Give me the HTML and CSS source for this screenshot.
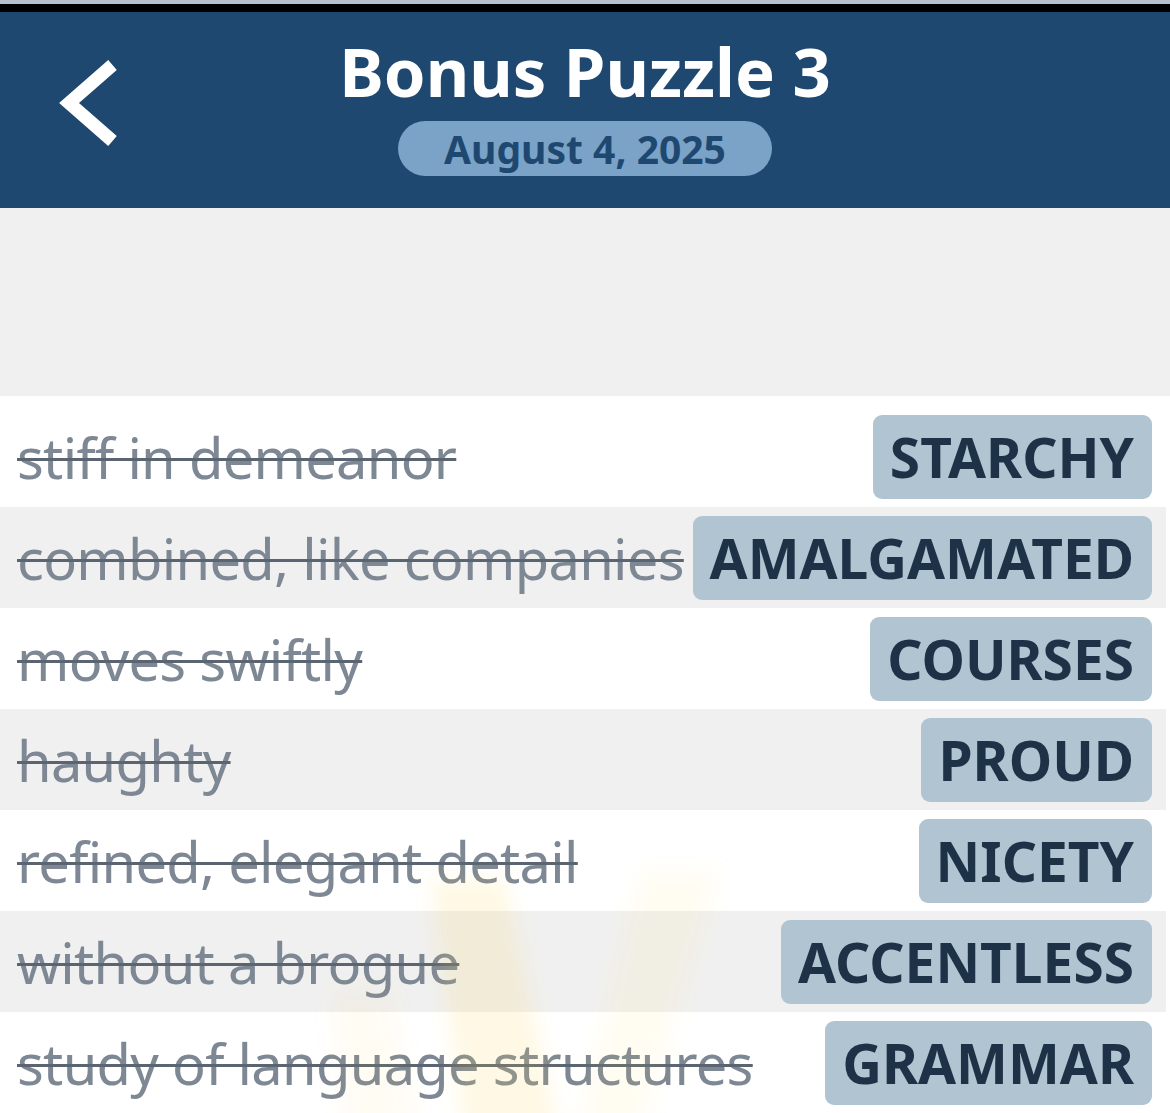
FILE: index.html
```html
<!DOCTYPE html>
<html lang="en">
<head>
<meta charset="utf-8">
<title>Bonus Puzzle 3</title>
<link rel="stylesheet" href="styles.css">
</head>
<body>
<div class="statusbar"></div>
<header class="header">
  <div class="back">
    <svg class="back-icon" width="64" height="95" viewBox="0 0 64 95" aria-hidden="true">
      <polyline points="56.5,9 13,47 56.5,85" fill="none" stroke="#ffffff" stroke-width="13" stroke-linejoin="miter" stroke-linecap="butt"/>
    </svg>
  </div>
  <div class="titles">
    <h1 class="title">Bonus Puzzle 3</h1>
    <div class="date">August 4, 2025</div>
  </div>
  <div class="spacer-col"></div>
</header>
<div class="gap"></div>
<main class="list">
  <svg class="watermark" width="1170" height="717" viewBox="0 0 1170 717" aria-hidden="true">
    <defs>
      <filter id="soft" x="-20%" y="-20%" width="140%" height="140%">
        <feGaussianBlur stdDeviation="10"/>
      </filter>
    </defs>
    <g filter="url(#soft)">
      <polygon points="430,484 505,484 560,740 465,740" fill="#fbd35a" opacity="0.16"/>
      <polygon points="640,474 720,474 640,740 575,740" fill="#fbd35a" opacity="0.08"/>
      <polygon points="330,594 390,594 420,740 345,740" fill="#fbd35a" opacity="0.06"/>
    </g>
  </svg>
  <div class="row"><span class="clue">stiff in demeanor</span><span class="answer">STARCHY</span></div>
  <div class="row alt"><span class="clue">combined, like companies</span><span class="answer">AMALGAMATED</span></div>
  <div class="row"><span class="clue">moves swiftly</span><span class="answer">COURSES</span></div>
  <div class="row alt"><span class="clue">haughty</span><span class="answer">PROUD</span></div>
  <div class="row"><span class="clue">refined, elegant detail</span><span class="answer">NICETY</span></div>
  <div class="row alt"><span class="clue">without a brogue</span><span class="answer">ACCENTLESS</span></div>
  <div class="row"><span class="clue">study of language structures</span><span class="answer">GRAMMAR</span></div>
</main>
</body>
</html>
```

FILE: styles.css
```css
* { box-sizing: border-box; }
html, body {
  margin: 0;
  padding: 0;
  background: #ffffff;
  font-family: "Noto Sans", "Open Sans", sans-serif;
}
body {
  width: 1170px;
  height: 1113px;
  overflow: hidden;
}
.statusbar {
  height: 12px;
  background: #000000;
  border-top: 4px solid #b7c1cd;
}
.header {
  height: 196px;
  background: #1f4870;
  display: grid;
  grid-template-columns: 1fr auto 1fr;
  padding-top: 26px;
}
.back {
  padding-left: 56px;
  padding-top: 18px;
}
.back-icon { display: block; }
.titles {
  display: flex;
  flex-direction: column;
  align-items: center;
}
.title {
  margin: 0;
  font-size: 67px;
  line-height: 66px;
  font-weight: 700;
  color: #ffffff;
}
.date {
  margin-top: 17px;
  height: 55px;
  line-height: 55px;
  padding: 0 46px;
  border-radius: 28px;
  background: #7aa3c7;
  color: #1f4870;
  font-size: 39px;
  font-weight: 700;
}
.gap {
  height: 188px;
  background: #f0f0f0;
}
.list {
  position: relative;
  padding-top: 10px;
  padding-right: 4px;
  background: #ffffff;
}
.watermark {
  position: absolute;
  left: 0;
  top: 0;
  pointer-events: none;
  z-index: 1;
}
.row {
  height: 101px;
  display: flex;
  align-items: center;
  justify-content: space-between;
  gap: 8px;
  padding-left: 17px;
  padding-right: 14px;
  background: #ffffff;
}
.row.alt { background: #f0f0f0; }
.clue {
  white-space: nowrap;
  font-size: 56px;
  color: #7e8894;
  text-decoration: line-through;
  text-decoration-color: #5b6572;
  text-decoration-thickness: 3px;
  letter-spacing: -0.7px;
}
.answer {
  flex: none;
  height: 84px;
  line-height: 84px;
  padding: 0 18px 0 17px;
  border-radius: 9px;
  background: #b1c4d1;
  color: #1e3247;
  font-size: 55px;
  font-weight: 700;
}
```
